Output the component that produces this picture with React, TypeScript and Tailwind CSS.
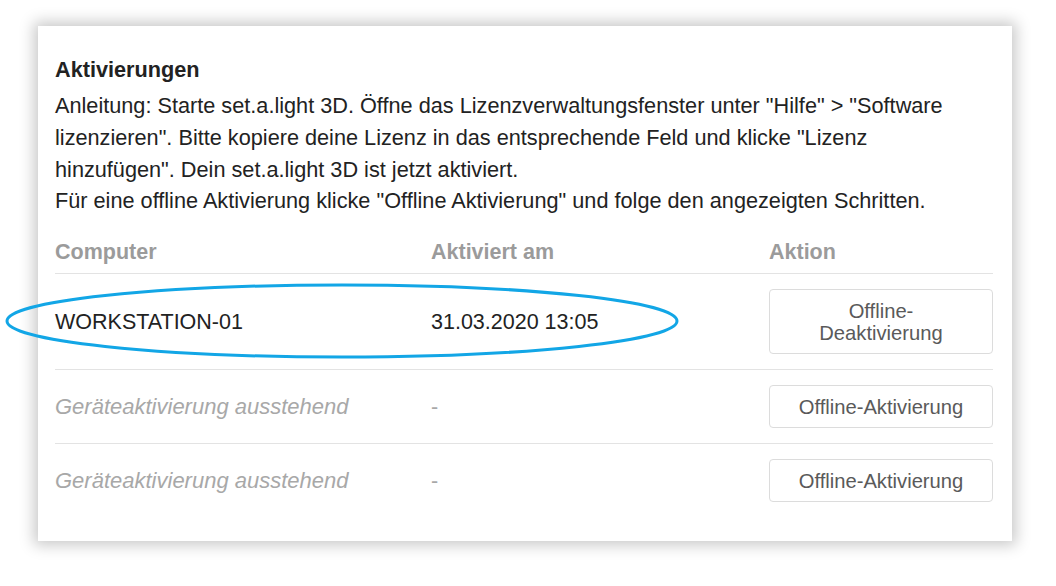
import React from "react";

const rows = [
  { name: "WORKSTATION-01", date: "31.03.2020 13:05", action: "Offline-\nDeaktivierung", active: true },
  { name: "Geräteaktivierung ausstehend", date: "-", action: "Offline-Aktivierung", active: false },
  { name: "Geräteaktivierung ausstehend", date: "-", action: "Offline-Aktivierung", active: false },
];

const App = () => {
  return (
    <div className="relative w-[1056px] h-[586px] bg-white font-['Liberation_Sans',Arial,sans-serif]">
      <div className="pt-[26px] pl-[38px]">
        <section className="w-[974px] h-[515px] bg-white shadow-[0_0_14px_4px_rgba(0,0,0,0.22)] pl-[17px] pr-[19px] pt-[28px]">
          {/* Intro */}
          <h2 className="text-[21.7px] leading-[32px] font-bold text-[#222] mb-[4px]">Aktivierungen</h2>
          <p className="text-[21.7px] leading-[31.8px] text-[#222]">
            Anleitung: Starte set.a.light 3D. Öffne das Lizenzverwaltungsfenster unter "Hilfe" &gt; "Software lizenzieren". Bitte kopiere deine Lizenz in das entsprechende Feld und klicke "Lizenz hinzufügen". Dein set.a.light 3D ist jetzt aktiviert.
            <br />
            Für eine offline Aktivierung klicke "Offline Aktivierung" und folge den angezeigten Schritten.
          </p>

          {/* Table */}
          <div className="mt-[23px]">
            <div className="grid grid-cols-[376px_338px_1fr] pb-[9px] border-b border-[#e3e3e3] text-[21.5px] leading-[24px] font-bold text-[#9b9b9b]">
              <div>Computer</div>
              <div>Aktiviert am</div>
              <div>Aktion</div>
            </div>
            {rows.map((r, i) => (
              <div
                key={i}
                className={`grid grid-cols-[376px_338px_1fr] items-center py-[15px] ${i < rows.length - 1 ? "border-b border-[#e3e3e3]" : ""}`}
              >
                <div className={r.active ? "text-[21.5px] text-[#222]" : "text-[22px] italic text-[#a8a8a8]"}>{r.name}</div>
                <div className={r.active ? "text-[21.5px] text-[#222]" : "text-[21.5px] text-[#a8a8a8]"}>{r.date}</div>
                <button className="w-full border border-[#dcdcdc] rounded-[4px] bg-white py-[9.5px] text-[20.2px] leading-[22px] text-[#5a5a5a] whitespace-pre-line">
                  {r.action}
                </button>
              </div>
            ))}
          </div>
        </section>
      </div>

      {/* blue highlight ellipse */}
      <svg className="absolute left-0 top-0 pointer-events-none" width="1056" height="586">
        <ellipse cx="342" cy="321" rx="335" ry="36" fill="none" stroke="#12a6e6" strokeWidth="3" />
      </svg>
    </div>
  );
};

export default App;
